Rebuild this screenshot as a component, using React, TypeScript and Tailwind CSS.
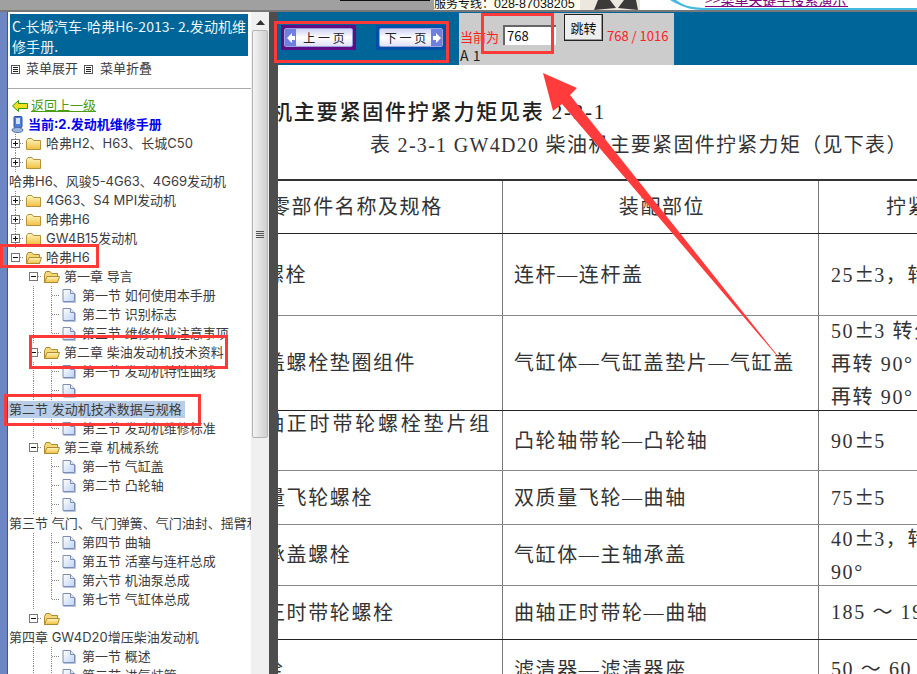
import React from "react";

const Grad = () => (
  <defs>
    <linearGradient id="fold" x1="0" y1="0" x2="0" y2="1">
      <stop offset="0" stopColor="#fff6c0" />
      <stop offset="1" stopColor="#f0c040" />
    </linearGradient>
    <linearGradient id="page" x1="0" y1="0" x2="1" y2="1">
      <stop offset="0" stopColor="#ffffff" />
      <stop offset="1" stopColor="#bcd4f4" />
    </linearGradient>
  </defs>
);

const Guide = ({ k }: { k: string }) => (
  <svg width="18" height="19" viewBox="0 0 18 19" className="shrink-0">
    {(k === "|" || k === "T") && <line x1="9.5" y1="0" x2="9.5" y2="19" stroke="#888" strokeDasharray="1 1" />}
    {k === "+" && <line x1="9.5" y1="0" x2="9.5" y2="19" stroke="#888" strokeDasharray="1 1" />}
    {(k === "T" || k === "L") && <line x1="10" y1="9.5" x2="18" y2="9.5" stroke="#888" strokeDasharray="1 1" />}
    {k === "L" && <line x1="9.5" y1="0" x2="9.5" y2="10" stroke="#888" strokeDasharray="1 1" />}
    {(k === "+" || k === "-") && (
      <>
        <line x1="14" y1="9.5" x2="18" y2="9.5" stroke="#888" strokeDasharray="1 1" />
        <rect x="5.5" y="5.5" width="8" height="8" fill="#fff" stroke="#777" />
        <line x1="7" y1="9.5" x2="12" y2="9.5" stroke="#111" />
        {k === "+" && <line x1="9.5" y1="7" x2="9.5" y2="12" stroke="#111" />}
      </>
    )}
  </svg>
);

const FolderClosed = () => (
  <svg width="18" height="19" viewBox="0 0 18 19" className="shrink-0">
    <Grad />
    <path d="M2.5 6.5 L4 4.5 H8 L9.5 6.5 H16.5 V15.5 H2.5 Z" fill="url(#fold)" stroke="#b8923a" />
  </svg>
);

const FolderOpen = () => (
  <svg width="18" height="19" viewBox="0 0 18 19" className="shrink-0">
    <Grad />
    <path d="M2.5 7.5 L4 4.5 H8 L9.5 6.5 H15.5 V15.5 H2.5 Z" fill="#f4d878" stroke="#b08a30" />
    <path d="M2.5 15.5 L5 9.5 H17.5 L15.5 15.5 Z" fill="url(#fold)" stroke="#b08a30" />
  </svg>
);

const PageIcon = () => (
  <svg width="18" height="19" viewBox="0 0 18 19" className="shrink-0">
    <Grad />
    <path d="M3 3.5 H10.5 L14.5 7.5 V15.5 H3 Z" fill="url(#page)" stroke="#7c8cb4" />
    <path d="M10.5 3.5 V7.5 H14.5" fill="#dfe9f8" stroke="#7c8cb4" />
    <path d="M3.5 16.5 H15.5 V8" fill="none" stroke="#b8c4dc" />
  </svg>
);

const MenuIcon = () => (
  <svg width="9" height="9" viewBox="0 0 9 9" className="shrink-0">
    <rect x="0.5" y="0.5" width="8" height="8" fill="#fff" stroke="#555" />
    <path d="M2 2.5 H7 M2 4.5 H7 M2 6.5 H7" stroke="#222" />
  </svg>
);

type Row = { g?: string[]; i?: "c" | "o" | "p"; t: string; hl?: boolean };

const sec = (t: string, k = "T"): Row => ({ g: [" ", "|", k], i: "p", t });

const rows: Row[] = [
  { g: ["+"], i: "c", t: "哈弗H2、H63、长城C50" },
  { g: ["+"], i: "c", t: "" },
  { t: "哈弗H6、风骏5-4G63、4G69发动机" },
  { g: ["+"], i: "c", t: "4G63、S4 MPI发动机" },
  { g: ["+"], i: "c", t: "哈弗H6" },
  { g: ["+"], i: "c", t: "GW4B15发动机" },
  { g: ["-"], i: "o", t: "哈弗H6" },
  { g: [" ", "-"], i: "o", t: "第一章 导言" },
  sec("第一节 如何使用本手册"),
  sec("第二节 识别标志"),
  sec("第三节 维修作业注意事项", "L"),
  { g: [" ", "-"], i: "o", t: "第二章 柴油发动机技术资料" },
  sec("第一节 发动机特性曲线"),
  sec(""),
  { t: "第二节 发动机技术数据与规格", hl: true },
  sec("第三节 发动机维修标准", "L"),
  { g: [" ", "-"], i: "o", t: "第三章 机械系统" },
  sec("第一节 气缸盖"),
  sec("第二节 凸轮轴"),
  sec(""),
  { t: "第三节 气门、气门弹簧、气门油封、摇臂和挺柱" },
  sec("第四节 曲轴"),
  sec("第五节 活塞与连杆总成"),
  sec("第六节 机油泵总成"),
  sec("第七节 气缸体总成", "L"),
  { g: [" ", "-"], i: "o", t: "" },
  { t: "第四章 GW4D20增压柴油发动机" },
  sec("第一节 概述"),
  sec("第二节 进气歧管"),
];

const TreeRow = ({ r }: { r: Row }) => (
  <div className="flex h-[19px] shrink-0 items-center whitespace-nowrap">
    {r.g ? (
      <div className="-ml-[2px] flex items-center">
        {r.g.map((k, n) => (
          <Guide key={n} k={k} />
        ))}
        {r.i === "c" && <FolderClosed />}
        {r.i === "o" && <FolderOpen />}
        {r.i === "p" && <PageIcon />}
        {r.t && <span className="ml-[4px] leading-[19px]">{r.t}</span>}
      </div>
    ) : r.hl ? (
      <span className="bg-[#b8cde8] pl-[1px] pr-[3px] leading-[17px]">{r.t}</span>
    ) : (
      <span className="pl-[1px] leading-[19px]">{r.t}</span>
    )}
  </div>
);

const Sidebar = () => (
  <div className="flex w-[243px] shrink-0 flex-col overflow-hidden bg-white pt-[2px] font-['Inter','Noto_Sans_CJK_SC',sans-serif] text-[13px] text-[#3c3c3c]">
    <div className="mx-[2px] h-[42px] w-[238px] bg-[#006699] pl-[2px] pt-[2px] font-['Noto_Sans_CJK_SC',sans-serif] text-[14px] leading-[20px] tracking-[0.1px] text-[#eef4f8]">
      C-长城汽车-哈弗H6-2013- 2.发动机维修手册.
    </div>
    <div className="flex h-[26px] shrink-0 items-center pl-[3px]">
      <MenuIcon />
      <span className="ml-[6px]">菜单展开</span>
      <span className="ml-[6px]">
        <MenuIcon />
      </span>
      <span className="ml-[7px]">菜单折叠</span>
    </div>
    <div className="mt-[6px] h-px shrink-0 bg-[#aaaaaa]" />
    <div className="mt-[7px] flex h-[19px] shrink-0 items-center pl-[4px]">
      <svg width="16" height="12" viewBox="0 0 16 12">
        <path d="M0.5 6 L6.5 0.5 V3.5 H15.5 V8.5 H6.5 V11.5 Z" fill="#f0e020" stroke="#2e9a10" />
      </svg>
      <span className="ml-[3px] text-[#4a9c14] underline">返回上一级</span>
    </div>
    <div className="flex h-[19px] shrink-0 items-center pl-[3px]">
      <svg width="14" height="17" viewBox="0 0 14 17">
        <rect x="3" y="0.5" width="8" height="11" rx="1" fill="#4a80d8" stroke="#2a52a0" />
        <rect x="5" y="2" width="4" height="6" fill="#cfe0f8" />
        <ellipse cx="6.5" cy="14" rx="5.5" ry="2.5" fill="#9cb8e0" stroke="#506c9c" />
      </svg>
      <span className="ml-[3px] font-bold text-[#0000ee]">当前:2.发动机维修手册</span>
    </div>
    {rows.map((r, n) => (
      <TreeRow key={n} r={r} />
    ))}
  </div>
);

const Scrollbar = () => (
  <div className="flex w-[18px] shrink-0 flex-col bg-[#f0f0f0] pt-[2px]">
    <div className="flex h-[16px] items-center justify-center">
      <svg width="9" height="5" viewBox="0 0 9 5">
        <path d="M4.5 0 L9 5 H0 Z" fill="#333" />
      </svg>
    </div>
    <div className="mx-[1px] flex h-[408px] items-center justify-center rounded-[2px] border border-[#b4b4b4] bg-gradient-to-r from-[#f4f4f4] to-[#cfcfcf]">
      <div className="flex w-[8px] flex-col gap-[1px]">
        <div className="h-px bg-[#555]" />
        <div className="h-px bg-[#555]" />
        <div className="h-px bg-[#555]" />
        <div className="h-px bg-[#555]" />
      </div>
    </div>
  </div>
);

const ArrowBlock = ({ left }: { left: boolean }) => (
  <div className="flex h-[17px] w-[11px] shrink-0 items-center justify-center bg-[#6f7fe0]">
    <svg width="8" height="10" viewBox="0 0 8 10">
      <path d={left ? "M0 5 L5 0 V3 H8 V7 H5 V10 Z" : "M8 5 L3 0 V3 H0 V7 H3 V10 Z"} fill="#fff" />
    </svg>
  </div>
);

const PageBtn = ({ left, label, cls }: { left: boolean; label: string; cls: string }) => (
  <div className={`flex h-[25px] items-center p-[3px] ${cls}`}>
    <div className="flex h-[19px] flex-1 items-center rounded-[2px] border border-[#9aa0d8] bg-gradient-to-b from-[#cfd2f4] via-[#ffffff] to-[#dfe0f6] text-[12px] text-[#222]">
      {left && <ArrowBlock left />}
      <span className="flex-1 whitespace-nowrap text-center">{label}</span>
      {!left && <ArrowBlock left={false} />}
    </div>
  </div>
);

const Toolbar = () => (
  <div className="flex h-[53px] shrink-0 bg-[#006699] pl-[3px]">
    <div className="mt-[13px] flex h-[25px] w-[178px] shrink-0 justify-between pr-[13px]">
      <PageBtn left label="上 一 页" cls="w-[75px] bg-[#5f0d86]" />
      <PageBtn left={false} label="下 一 页" cls="w-[70px] bg-[#0050a8]" />
    </div>
    <div className="mt-px flex h-[52px] w-[215px] bg-[#cccccc] pl-px">
      <div className="flex w-[100%] flex-col">
        <div className="flex h-[34px] items-start">
          <span className="mt-[15px] text-[13px] leading-[18px] text-[#ff2020]">当前为</span>
          <div className="ml-[4px] mt-[12px] h-[20px] w-[53px] border-l-2 border-t-2 border-[#666] bg-white pl-[2px] text-[13px] leading-[18px] text-[#111]">
            768
          </div>
          <div className="ml-[8px] mt-px flex h-[27px] w-[39px] items-center justify-center border border-[#222] bg-[#eeeeee] text-[13px] text-[#111] [box-shadow:inset_-1px_-1px_#999]">
            跳转
          </div>
          <span className="ml-[4px] mt-[14px] text-[13px] leading-[18px] text-[#ff2020]">768 / 1016</span>
        </div>
        <div className="text-[14px] leading-[16px] tracking-[0.5px] text-[#222]">A 1</div>
      </div>
    </div>
  </div>
);

type TR = {
  h: string;
  line: string;
  c1: string;
  c1cls: string;
  c2: string;
  c2cls?: string;
  c3: string[];
  c3cls?: string;
};

const table: TR[] = [
  { h: "h-[53px]", line: "border-[#222]", c1: "零部件名称及规格", c1cls: "-ml-[8px]", c2: "装配部位", c2cls: "justify-center pr-[8px]", c3: ["拧紧力矩"], c3cls: "pl-[55px]" },
  { h: "h-[82px]", line: "border-[#888]", c1: "螺栓", c1cls: "-ml-[14px]", c2: "连杆—连杆盖", c3: ["25±3，转90°"] },
  { h: "h-[95px]", line: "border-[#222]", c1: "盖螺栓垫圈组件", c1cls: "-ml-[13px]", c2: "气缸体—气缸盖垫片—气缸盖", c3: ["50±3 转分", "再转 90°", "再转 90°"] },
  { h: "h-[60px]", line: "border-[#888]", c1: "轴正时带轮螺栓垫片组", c1cls: "-ml-[14px] -mt-[33px] tracking-[2.8px]", c2: "凸轮轴带轮—凸轮轴", c3: ["90±5"] },
  { h: "h-[54px]", line: "border-[#888]", c1: "量飞轮螺栓", c1cls: "-ml-[13px]", c2: "双质量飞轮—曲轴", c3: ["75±5"] },
  { h: "h-[61px]", line: "border-[#888]", c1: "承盖螺栓", c1cls: "-ml-[13px]", c2: "气缸体—主轴承盖", c3: ["40±3，转", "90°"] },
  { h: "h-[54px]", line: "border-[#222]", c1: "正时带轮螺栓", c1cls: "-ml-[13px]", c2: "曲轴正时带轮—曲轴", c3: ["185 ～ 190"] },
  { h: "h-[60px]", line: "border-[#888]", c1: "栓", c1cls: "-ml-[15px]", c2: "滤清器—滤清器座", c3: ["50 ～ 60"] },
];

const Torque = ({ s }: { s: string }) => {
  const parts = s.split("±");
  if (parts.length < 2) return <>{s}</>;
  return (
    <>
      {parts[0]}
      <span className="font-['Noto_Sans_CJK_SC',sans-serif] tracking-[0px]">±</span>
      {parts[1]}
    </>
  );
};

const Doc = () => (
  <div className="flex-1 overflow-hidden bg-white font-['Liberation_Serif','Noto_Sans_CJK_SC',serif] text-[20px] tracking-[1.6px] text-[#333]">
    <div className="h-[114px] overflow-hidden whitespace-nowrap pt-[33px]">
      <div className="-ml-[7px] h-[33px] text-[21px] font-medium leading-[28px] tracking-[1.8px] text-[#222]">机主要紧固件拧紧力矩见表 2-3-1</div>
      <div className="ml-[92px] leading-[28px] tracking-[1.3px] text-[#333]">表 2-3-1 GW4D20 柴油机主要紧固件拧紧力矩（见下表）</div>
    </div>
    <div className="border-t-2 border-[#333]">
      {table.map((r) => (
        <div key={r.c2} className={`flex border-b ${r.h} ${r.line}`}>
          <div className="flex w-[224px] shrink-0 items-center overflow-hidden whitespace-nowrap">
            <span className={r.c1cls}>{r.c1}</span>
          </div>
          <div className={`flex w-[316px] shrink-0 items-center whitespace-nowrap border-l border-[#777] pl-[11px] ${r.c2cls ?? ""}`}>
            {r.c2}
          </div>
          <div className={`flex flex-1 flex-col justify-center overflow-hidden whitespace-nowrap border-l border-[#777] leading-[33px] ${r.c3cls ?? "pl-[12px]"}`}>
            {r.c3.map((l, n) => (
              <div key={n} className={r.c3cls ? "pl-[12px]" : ""}>
                <Torque s={l} />
              </div>
            ))}
          </div>
        </div>
      ))}
    </div>
  </div>
);

const TopStrip = () => (
  <div className="flex h-[10px] shrink-0 overflow-hidden bg-[#a0a0a0]">
    <div className="w-[340px] shrink-0" />
    <div className="h-px w-[90px] shrink-0 bg-[#111]" />
    <div className="w-[4px] shrink-0" />
    <div className="w-[146px] shrink-0 overflow-hidden bg-[#fffff0] text-[12px] leading-[10px] text-[#111]">
      <div className="-mt-[2px] whitespace-nowrap">
        服务专线：<span className="font-['Liberation_Sans',sans-serif] text-[12.5px]">028-87038205</span>
      </div>
    </div>
    <div className="relative h-[10px] w-[337px] shrink-0 overflow-hidden bg-white">
      <svg width="337" height="10" viewBox="0 0 337 10">
        <rect width="60" height="10" fill="#ece8e0" />
        <path d="M14 10 L18 0 H30 L36 8 Z M38 8 L44 0 H56 L58 10 Z" fill="#3c3a38" />
        <path d="M96 0 C104 6 112 8 130 8 H337 V10 H122 C110 10 100 6 90 0 Z" fill="#46b8e4" />
      </svg>
      <div className="absolute left-[125px] top-0 h-[7px] w-[143px] overflow-hidden border-b border-[#800080] text-[14px] leading-[14px] text-[#800080]">
        <div className="-mt-[8px] whitespace-nowrap">{">>"}菜单关键字搜索演示</div>
      </div>
    </div>
  </div>
);

const Marks = () => (
  <>
    <div className="absolute left-0 top-[244px] h-[24px] w-[99px] border-[3px] border-[#ff3838]" />
    <div className="absolute left-[29px] top-[335px] h-[34px] w-[199px] border-[3px] border-[#ff3838]" />
    <div className="absolute left-[4px] top-[394px] h-[32px] w-[197px] border-[3px] border-[#ff3838]" />
    <div className="absolute left-[274px] top-[21px] h-[42px] w-[175px] border-[3px] border-[#ff3838]" />
    <div className="absolute left-[481px] top-[13px] h-[41px] w-[73px] border-[3px] border-[#ff3838]" />
    <svg width="917" height="674" viewBox="0 0 917 674" className="pointer-events-none absolute left-0 top-0">
      <path d="M543 73 L577 88 L570 95 L789 370 L562 104 L553 111 Z" fill="#ff3b3b" />
    </svg>
  </>
);

export default function App() {
  return (
    <div className="relative flex h-[674px] w-[917px] flex-col overflow-hidden bg-[#a0a0a0] font-['Noto_Sans_CJK_SC','Liberation_Sans',sans-serif]">
      <TopStrip />
      <div className="h-[2px] shrink-0 bg-[#777777]" />
      <div className="flex min-h-0 flex-1">
        <div className="w-[8px] shrink-0 border-r border-[#555] bg-[#6c86c4]" />
        <Sidebar />
        <Scrollbar />
        <div className="w-[9px] shrink-0 bg-[#4d4d4d]" />
        <div className="flex min-w-0 flex-1 flex-col">
          <Toolbar />
          <Doc />
        </div>
      </div>
      <Marks />
    </div>
  );
}
